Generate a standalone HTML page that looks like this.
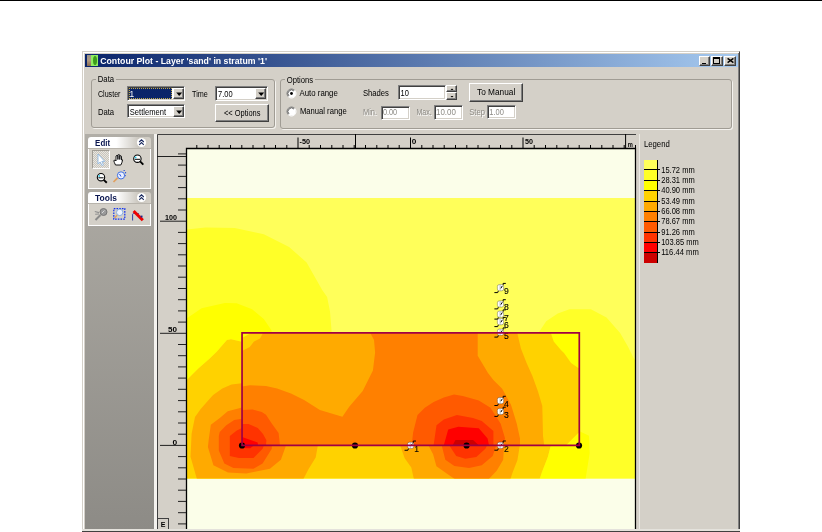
<!DOCTYPE html>
<html><head><meta charset="utf-8">
<style>
html,body{margin:0;padding:0;width:822px;height:532px;overflow:hidden;background:#fff;font-family:"Liberation Sans",sans-serif;}
.a{position:absolute;}
.sunk{position:absolute;background:#fff;box-sizing:border-box;border-top:1px solid #808080;border-left:1px solid #808080;border-bottom:1px solid #fff;border-right:1px solid #fff;box-shadow:inset 1px 1px 0 #404040, inset -1px -1px 0 #d4d0c8;}
.btn{position:absolute;background:#d4d0c8;box-sizing:border-box;border-top:1px solid #fff;border-left:1px solid #fff;border-bottom:1px solid #404040;border-right:1px solid #404040;box-shadow:inset -1px -1px 0 #808080;}
.gb{position:absolute;box-sizing:border-box;border:1px solid #a09c94;border-radius:3px;box-shadow:1px 1px 0 #f4f2ee;}
svg text{font-family:"Liberation Sans",sans-serif;}
</style></head><body>
<div class="a" style="left:0;top:0;width:822px;height:1px;background:#000"></div>

<div class="a" style="left:82px;top:51px;width:658px;height:481px;background:#d4d0c8;box-sizing:border-box;border-left:1px solid #d4d0c8;border-top:1px solid #d4d0c8;border-right:1px solid #404040;box-shadow:inset 1px 1px 0 #fff, inset -1px 0 0 #808080;"></div>
<div class="a" style="left:85px;top:54px;width:653px;height:13px;background:linear-gradient(to right,#0a246a,#a6caf0);"></div>
<div class="a" style="left:87px;top:55px;width:4px;height:11px;background:linear-gradient(to bottom,#9a9488,#b09a80 50%,#8a6a50);"></div>
<div class="a" style="left:91px;top:55px;width:7px;height:11px;background:#90ee60;"></div>
<div class="a" style="left:92.5px;top:56px;width:4px;height:9px;border-radius:50%;background:#3c9c1c;"></div>
<div class="btn" style="left:699.2px;top:56px;width:11.1px;height:9.5px;"><div class="a" style="left:2px;top:5.7px;width:4.2px;height:1.4px;background:#000"></div></div>
<div class="btn" style="left:710.9px;top:56px;width:11.7px;height:9.5px;"><div class="a" style="left:1.3px;top:0.3px;width:6.8px;height:6.5px;box-sizing:border-box;border:1.1px solid #000;border-top-width:2px;"></div></div>
<div class="btn" style="left:724.2px;top:56px;width:11.4px;height:9.5px;"><svg class="a" style="left:1.8px;top:1.2px" width="8" height="6"><path d="M0.6,0.4 L6.4,4.6 M6.4,0.4 L0.6,4.6" stroke="#000" stroke-width="1.5"/></svg></div>
<div class="gb" style="left:91px;top:78.5px;width:183.5px;height:49.5px;"></div>
<div class="a" style="left:96px;top:74px;width:20px;height:8px;background:#d4d0c8;"></div>
<div class="sunk" style="left:127px;top:86.4px;width:58.30000000000001px;height:14.399999999999991px;"></div><div class="btn" style="left:173.0px;top:88.0px;width:11.2px;height:11.199999999999992px;border-right-color:#404040;"><svg class="a" style="left:2px;top:2.999999999999996px" width="7" height="5"><path d="M0.2,0.6 H6.2 L3.2,4 Z" fill="#000"/></svg></div>
<div class="a" style="left:129px;top:88px;width:43px;height:11px;background:#0a246a;box-sizing:border-box;border:1px dotted #c0a848;"></div>
<div class="sunk" style="left:127px;top:104px;width:58.30000000000001px;height:14.400000000000006px;"></div><div class="btn" style="left:173.0px;top:105.6px;width:11.2px;height:11.200000000000006px;border-right-color:#404040;"><svg class="a" style="left:2px;top:3.000000000000003px" width="7" height="5"><path d="M0.2,0.6 H6.2 L3.2,4 Z" fill="#000"/></svg></div>
<div class="sunk" style="left:215px;top:86.4px;width:52.5px;height:14.399999999999991px;"></div><div class="btn" style="left:255.2px;top:88.0px;width:11.2px;height:11.199999999999992px;border-right-color:#404040;"><svg class="a" style="left:2px;top:2.999999999999996px" width="7" height="5"><path d="M0.2,0.6 H6.2 L3.2,4 Z" fill="#000"/></svg></div>
<div class="btn" style="left:215px;top:104px;width:53.5px;height:17.799999999999997px;"></div>
<div class="gb" style="left:280px;top:79px;width:452px;height:50px;"></div>
<div class="a" style="left:285px;top:75px;width:30px;height:8px;background:#d4d0c8;"></div>
<svg class="a" style="left:286px;top:87.8px" width="11" height="11"><circle cx="5.5" cy="5.5" r="4" fill="#fff"/><path d="M2.3,8.7 A4.5,4.5 0 0 1 8.7,2.3" stroke="#808080" stroke-width="1" fill="none"/><path d="M8.7,2.3 A4.5,4.5 0 0 1 2.3,8.7" stroke="#fff" stroke-width="1" fill="none"/><path d="M3,8 A3.5,3.5 0 0 1 8,3" stroke="#404040" stroke-width="0.8" fill="none"/></svg>
<svg class="a" style="left:286px;top:105.6px" width="11" height="11"><circle cx="5.5" cy="5.5" r="4" fill="#fff"/><path d="M2.3,8.7 A4.5,4.5 0 0 1 8.7,2.3" stroke="#808080" stroke-width="1" fill="none"/><path d="M8.7,2.3 A4.5,4.5 0 0 1 2.3,8.7" stroke="#fff" stroke-width="1" fill="none"/><path d="M3,8 A3.5,3.5 0 0 1 8,3" stroke="#404040" stroke-width="0.8" fill="none"/></svg>
<svg class="a" style="left:286px;top:87.8px" width="11" height="11"><circle cx="5.5" cy="5.5" r="1.4" fill="#000"/></svg>
<div class="sunk" style="left:398px;top:85px;width:48px;height:14.799999999999997px;"></div>
<div class="btn" style="left:446px;top:84.6px;width:11px;height:7.400000000000006px;"></div>
<div class="btn" style="left:446px;top:92.3px;width:11px;height:7.5px;"></div>
<svg class="a" style="left:449px;top:86.5px" width="6" height="12"><path d="M1.5,3 H4.5 L3,1.5Z M1.5,9 H4.5 L3,10.5Z" fill="#000"/></svg>
<div class="sunk" style="left:381px;top:105.5px;width:29.30000000000001px;height:14.0px;"></div>
<div class="sunk" style="left:434px;top:105.3px;width:29px;height:14.299999999999997px;"></div>
<div class="btn" style="left:469px;top:83px;width:53.5px;height:18.5px;"></div>
<div class="sunk" style="left:487px;top:105.3px;width:29px;height:14.200000000000003px;"></div>
<div class="a" style="left:85px;top:134px;width:69px;height:395px;background:linear-gradient(to bottom,rgb(177,174,167),rgb(141,139,134));"></div>
<div class="a" style="left:154px;top:134px;width:3px;height:395px;background:#f4f2ee;"></div>
<div class="a" style="left:88px;top:137px;width:63px;height:11px;border-radius:3px 3px 0 0;background:linear-gradient(to right,#fff 0%,#fff 45%,#cbc7bf 80%,#d4d0c8 100%);"></div><svg class="a" style="left:136px;top:137px" width="11" height="11"><circle cx="5.5" cy="5.5" r="4.6" fill="#fff"/><path d="M3.2,5 L5.5,2.8 L7.8,5 M3.2,7.8 L5.5,5.6 L7.8,7.8" stroke="#1a2a60" stroke-width="1.1" fill="none"/></svg>
<div class="a" style="left:88px;top:148px;width:63px;height:41px;box-sizing:border-box;background:#d4d0c8;border:1px solid #fff;border-top:none;"></div>
<div class="a" style="left:88px;top:148px;width:63px;height:1px;background:#b8b4ac;"></div>
<div class="a" style="left:92px;top:150px;width:18px;height:19px;box-sizing:border-box;border:1px solid #a09c94;border-right-color:#fff;border-bottom-color:#fff;background-color:#e8e6e0;background-image:linear-gradient(45deg,#c8c4bc 25%,transparent 25%,transparent 75%,#c8c4bc 75%),linear-gradient(45deg,#c8c4bc 25%,transparent 25%,transparent 75%,#c8c4bc 75%);background-size:2px 2px;background-position:0 0,1px 1px;"></div>
<svg class="a" style="left:85px;top:148px" width="70" height="80">
 <path d="M13,6 V16 L15.2,14 L17,17.5 L18.5,16.8 L16.8,13.4 L19.8,13.4 Z" fill="#fff" stroke="#90b8e0" stroke-width="0.9"/>
 <path d="M30.5,17 Q29,14 28.8,12.6 L30.2,12 L31,13 V8 L32,7.3 L32.9,7.8 V11.5 V6.9 L33.9,6.6 L34.8,7 V11.5 V7.8 L35.8,7.8 L36.5,8.3 V12 Q37.5,11 37.6,12 Q37,15 35.8,17 Z" fill="#fff" stroke="#000" stroke-width="0.9"/>
 <circle cx="52.4" cy="10.7" r="3.7" fill="#fff" stroke="#000" stroke-width="1.1"/><path d="M49.8,11.3 H55" stroke="#000" stroke-width="1"/><circle cx="50.6" cy="9.4" r="0.9" fill="#20c8e8"/><path d="M55.1,13.4 L58.3,16.6" stroke="#000" stroke-width="1.9"/>
 <circle cx="16" cy="29.2" r="3.7" fill="#fff" stroke="#000" stroke-width="1.1"/><path d="M13.4,29.8 H18.6" stroke="#000" stroke-width="1"/><circle cx="14.2" cy="27.9" r="0.9" fill="#20c8e8"/><path d="M18.7,31.9 L21.8,34.8" stroke="#000" stroke-width="1.9"/>
 <path d="M28.5,34 L32.6,29.8" stroke="#e0a060" stroke-width="1.7"/><circle cx="36" cy="27.4" r="3.6" fill="#e8eeff" stroke="#4070e0" stroke-width="1"/><path d="M34.5,26 L36,28.5" stroke="#1040e0" stroke-width="0.9"/><path d="M38.6,22.5 h1.2 M40.6,24 v1.4 M40.2,27 v1.2" stroke="#1040e0" stroke-width="0.9"/>
</svg>
<div class="a" style="left:88px;top:192px;width:63px;height:11px;border-radius:3px 3px 0 0;background:linear-gradient(to right,#fff 0%,#fff 45%,#cbc7bf 80%,#d4d0c8 100%);"></div><svg class="a" style="left:136px;top:192px" width="11" height="11"><circle cx="5.5" cy="5.5" r="4.6" fill="#fff"/><path d="M3.2,5 L5.5,2.8 L7.8,5 M3.2,7.8 L5.5,5.6 L7.8,7.8" stroke="#1a2a60" stroke-width="1.1" fill="none"/></svg>
<div class="a" style="left:88px;top:203px;width:63px;height:23px;box-sizing:border-box;background:#d4d0c8;border:1px solid #fff;border-top:none;"></div>
<div class="a" style="left:88px;top:203px;width:63px;height:1px;background:#b8b4ac;"></div>
<svg class="a" style="left:85px;top:203px" width="70" height="22">
 <path d="M10.5,17 L15.5,12" stroke="#8a8a8a" stroke-width="1.9"/><circle cx="18.5" cy="9" r="3.5" fill="#9a9a9a" stroke="#707070" stroke-width="0.9"/><path d="M17,10 L19.5,7.5" stroke="#e0e0e0" stroke-width="0.9"/><path d="M9.8,8.5 L14,9.6 M10.2,11.3 L14,11" stroke="#909090" stroke-width="1.1"/>
 <rect x="28.8" y="5.6" width="11" height="10.6" fill="none" stroke="#1030f0" stroke-width="1.2" stroke-dasharray="1.6,1.1"/><circle cx="34.7" cy="9.4" r="3.2" fill="#eef4ff" stroke="#80a8e0" stroke-width="0.9"/><path d="M29.6,15 L32.2,12" stroke="#e0a060" stroke-width="1.4"/>
 <path d="M47.6,17.5 V11.3 Q48,10 50,10.3 L54,10.8" stroke="#2030a0" stroke-width="0.9" fill="none"/><path d="M48.6,8 L57.8,17.2" stroke="#ee0000" stroke-width="3"/><rect x="55.6" y="12.6" width="1.9" height="1.9" fill="#1a2a90"/>
</svg>
<svg class="a" style="left:0;top:0;will-change:transform" width="822" height="532">
<defs><clipPath id="cO"><rect x="187" y="198" width="448" height="280.5"/></clipPath><clipPath id="cI"><rect x="242" y="333" width="337" height="112.3"/></clipPath></defs>
<rect x="157" y="134" width="479" height="395" fill="#d4d0c8"/>
<path d="M157.5,529 V134.5 H636" stroke="#404040" stroke-width="1" fill="none"/>
<rect x="186" y="148" width="450" height="381" fill="#fbfee9"/>
<g clip-path="url(#cO)">
<path d="M187,198 L635,198 L635,480 L187,480 Z" fill="#ffff5a"/>
<path d="M186,229.5 L205.5,227.5 L234.7,227.9 L263.8,234.3 L289.1,247 L306.6,262.5 L322.2,290 L327.1,297 L330,311.4 L331.5,330 L332,340 L538.4,340 L538.4,333 L546.2,321.3 L557.8,313.5 L569.5,309.2 L590.9,309.2 L606.5,317.4 L620.1,333 L627.9,346.6 L633.7,358.3 L636,361 L636,480 L186,480 Z" fill="#ffff28"/>
<path d="M186,318.9 L201.6,308.2 L224.9,303 L236.6,303.3 L252.1,309.2 L263.8,318.9 L271.6,330.6 L273,345 L242,345 L241,341.4 L231,339.3 L226.9,340 L216.9,351.4 L209.7,358.6 L198.3,368.6 L186,380.7 Z M550,440 L579,431 L589,435.7 L589.7,452.9 L585.4,480 L539.3,480 L541.8,472.5 L547.9,456.7 L550.9,445 Z" fill="#ffff00"/>
<path d="M186,380.7 L198.3,368.6 L209.7,358.6 L216.9,351.4 L226.9,340 L231,339.3 L241,341.4 L300,345 L550.9,440 L550.9,445 L547.9,456.7 L541.8,472.5 L539.3,480 L186,480 Z" fill="#ffd200"/>
<path d="M242,383.2 L231.5,384.5 L222.3,388.4 L213.1,395 L208.6,400 L200.7,409 L195,416.9 L191.6,433.8 L190.5,456.8 L197.2,480 L302.9,480 L308.6,468.9 L315.7,457.4 L317.9,445 L317.9,400 Z M400,445 L404.7,458.2 L411.3,467.6 L414.1,480 L510.1,480 L512.6,472.5 L517.4,460.3 L519.9,445 L519.9,440 L400,440 Z" fill="#ffaa00"/>
<path d="M242,407.5 L227.7,411.3 L219.8,418 L210.8,424.8 L208.6,440.6 L207.9,447 L213.4,465.2 L228,472.5 L246.2,473.4 L269.9,468.8 L280.9,459.7 L285.5,447 L286.4,436 L287,420 Z M428.2,445 L433.1,454.2 L436.4,466.3 L447.4,474 L456.1,480 L487.9,480 L496.7,470.7 L503.2,459.7 L504.1,445 L504,440 L428,440 Z" fill="#ff8000"/>
<path d="M242,418.7 L234.2,420 L226.3,425.3 L219.7,432 L218.8,436 L218.8,450.6 L224.3,463.4 L233.4,468 L253.5,468.8 L262.6,463.4 L271.8,448.8 L271.8,436 L271,430 Z M441.6,445 L445.3,459.7 L454.4,466.1 L469,468 L481.8,465.2 L492.7,456.1 L496.4,445 L496,440 L441,440 Z" fill="#ff5a00"/>
<path d="M242,428 L236.8,430.5 L229.8,436 L229.8,456.1 L238.9,457.9 L253.5,457.9 L262.6,448.8 L266.3,439.6 L266.3,436 L262,432 Z M449,445 L456.2,456.1 L465.3,458.8 L476.3,457 L485.4,448.8 L487.2,445 L487,440 L449,440 Z" fill="#ff3300"/>
<path d="M242,437 L257.7,442.6 L250.2,448.2 L242,448 Z" fill="#ff0000"/>
</g><g clip-path="url(#cI)">
<path d="M242,333 L579,333 L579,445.3 L242,445.3 Z" fill="#ffaa00"/>
<path d="M242,333 L242,351 L249.7,347 L254,341.4 L260,338.6 L263,333 Z M517.3,333 L520.9,348.6 L526.6,362.9 L532.3,375.7 L538,391.4 L542.3,406 L543,436 L544.2,445.3 L579,445.3 L579,333 Z" fill="#ffd200"/>
<path d="M242,333 L242,338 L251,333 Z M550.9,333 L553.7,341.4 L560.9,350 L564,352.9 L571.1,362.9 L578.3,367.9 L579,368 L579,333 Z M566,445.3 L578.3,433 L579,433 L579,445.3 Z" fill="#ffff00"/>
<path d="M242,386.4 L250,385.2 L266,386 L277.1,388.6 L291,393.5 L304.1,399.9 L319.9,410 L342.4,416.8 L349.2,406.7 L362.7,390.9 L372.9,370.6 L375.1,352.5 L374,340 L370.3,333 L477.7,333 L477.7,355.7 L488,373 L493.4,380 L502.2,388.8 L511,404.8 L516.8,423.8 L520,438.4 L520,445.3 L242,445.3 Z" fill="#ff8000"/>
<path d="M242,410.1 L252.6,409.5 L261.8,412.1 L266,414.7 L271.4,423.1 L278.6,433.1 L280,445.3 L242,445.3 Z M411.7,445.3 L413.1,432.6 L417.5,415 L424.8,407.7 L433.6,401.9 L443.8,397.5 L454,394.6 L462.8,396.1 L478.8,400.4 L490.5,407.7 L500.7,423.8 L505.1,438.4 L502.2,445.3 Z" fill="#ff5a00"/>
<path d="M242,424 L248.6,424 L257.8,427.9 L263,434 L266.4,440.3 L266,445.3 L242,445.3 Z M433.6,445.3 L436.5,425.3 L443.8,419.4 L456.9,415 L473,418 L481.8,420.9 L493.4,431.1 L493.4,445.3 Z" fill="#ff3300"/>
<path d="M242,437 L257.7,442.6 L258,445.3 L242,445.3 Z M443.8,445.3 L448.2,429.6 L458.4,426.7 L478.8,428.2 L487.6,438.4 L489,445.3 Z" fill="#ff0000"/>
<path d="M452.6,445.3 L455.5,439.9 L473,439.9 L478.8,445.3 Z" fill="#cc0000"/>
</g>
<g transform="translate(410.65,445.35)"><path d="M-6.1,4.9 H-2.8 L-2.2,3.2 M2.6,-2.4 V-4.3 H5.3" stroke="#000" stroke-width="1" fill="none"/><rect x="-3.1" y="-3.1" width="6.2" height="6.2" rx="1.8" fill="#fff" stroke="rgba(0,0,0,0.4)" stroke-width="0.7"/><path d="M-0.4,-3 V3" stroke="#90a0b0" stroke-width="0.7"/><path d="M1.8,-1.8 L0.4,0.6" stroke="#000" stroke-width="1"/><text x="3.6" y="6.3" font-size="8.4" textLength="4.8" lengthAdjust="spacingAndGlyphs" fill="#000" stroke="#000" stroke-width="0.1">1</text></g>
<g transform="translate(500.5,445.3)"><path d="M-6.1,4.9 H-2.8 L-2.2,3.2 M2.6,-2.4 V-4.3 H5.3" stroke="#000" stroke-width="1" fill="none"/><rect x="-3.1" y="-3.1" width="6.2" height="6.2" rx="1.8" fill="#fff" stroke="rgba(0,0,0,0.4)" stroke-width="0.7"/><path d="M-0.4,-3 V3" stroke="#90a0b0" stroke-width="0.7"/><path d="M1.8,-1.8 L0.4,0.6" stroke="#000" stroke-width="1"/><text x="3.6" y="6.3" font-size="8.4" textLength="4.8" lengthAdjust="spacingAndGlyphs" fill="#000" stroke="#000" stroke-width="0.1">2</text></g>
<g transform="translate(500.5,411.5)"><path d="M-6.1,4.9 H-2.8 L-2.2,3.2 M2.6,-2.4 V-4.3 H5.3" stroke="#000" stroke-width="1" fill="none"/><rect x="-3.1" y="-3.1" width="6.2" height="6.2" rx="1.8" fill="#fff" stroke="rgba(0,0,0,0.4)" stroke-width="0.7"/><path d="M-0.4,-3 V3" stroke="#90a0b0" stroke-width="0.7"/><path d="M1.8,-1.8 L0.4,0.6" stroke="#000" stroke-width="1"/><text x="3.6" y="6.3" font-size="8.4" textLength="4.8" lengthAdjust="spacingAndGlyphs" fill="#000" stroke="#000" stroke-width="0.1">3</text></g>
<g transform="translate(500.5,400.6)"><path d="M-6.1,4.9 H-2.8 L-2.2,3.2 M2.6,-2.4 V-4.3 H5.3" stroke="#000" stroke-width="1" fill="none"/><rect x="-3.1" y="-3.1" width="6.2" height="6.2" rx="1.8" fill="#fff" stroke="rgba(0,0,0,0.4)" stroke-width="0.7"/><path d="M-0.4,-3 V3" stroke="#90a0b0" stroke-width="0.7"/><path d="M1.8,-1.8 L0.4,0.6" stroke="#000" stroke-width="1"/><text x="3.6" y="6.3" font-size="8.4" textLength="4.8" lengthAdjust="spacingAndGlyphs" fill="#000" stroke="#000" stroke-width="0.1">4</text></g>
<g transform="translate(500.5,332.2)"><path d="M-6.1,4.9 H-2.8 L-2.2,3.2 M2.6,-2.4 V-4.3 H5.3" stroke="#000" stroke-width="1" fill="none"/><rect x="-3.1" y="-3.1" width="6.2" height="6.2" rx="1.8" fill="#fff" stroke="rgba(0,0,0,0.4)" stroke-width="0.7"/><path d="M-0.4,-3 V3" stroke="#90a0b0" stroke-width="0.7"/><path d="M1.8,-1.8 L0.4,0.6" stroke="#000" stroke-width="1"/><text x="3.6" y="6.3" font-size="8.4" textLength="4.8" lengthAdjust="spacingAndGlyphs" fill="#000" stroke="#000" stroke-width="0.1">5</text></g>
<g transform="translate(500.5,321.7)"><path d="M-6.1,4.9 H-2.8 L-2.2,3.2 M2.6,-2.4 V-4.3 H5.3" stroke="#000" stroke-width="1" fill="none"/><rect x="-3.1" y="-3.1" width="6.2" height="6.2" rx="1.8" fill="#fff" stroke="rgba(0,0,0,0.4)" stroke-width="0.7"/><path d="M-0.4,-3 V3" stroke="#90a0b0" stroke-width="0.7"/><path d="M1.8,-1.8 L0.4,0.6" stroke="#000" stroke-width="1"/><text x="3.6" y="6.3" font-size="8.4" textLength="4.8" lengthAdjust="spacingAndGlyphs" fill="#000" stroke="#000" stroke-width="0.1">6</text></g>
<g transform="translate(500.5,314.2)"><path d="M-6.1,4.9 H-2.8 L-2.2,3.2 M2.6,-2.4 V-4.3 H5.3" stroke="#000" stroke-width="1" fill="none"/><rect x="-3.1" y="-3.1" width="6.2" height="6.2" rx="1.8" fill="#fff" stroke="rgba(0,0,0,0.4)" stroke-width="0.7"/><path d="M-0.4,-3 V3" stroke="#90a0b0" stroke-width="0.7"/><path d="M1.8,-1.8 L0.4,0.6" stroke="#000" stroke-width="1"/><text x="3.6" y="6.3" font-size="8.4" textLength="4.8" lengthAdjust="spacingAndGlyphs" fill="#000" stroke="#000" stroke-width="0.1">7</text></g>
<g transform="translate(500.5,304)"><path d="M-6.1,4.9 H-2.8 L-2.2,3.2 M2.6,-2.4 V-4.3 H5.3" stroke="#000" stroke-width="1" fill="none"/><rect x="-3.1" y="-3.1" width="6.2" height="6.2" rx="1.8" fill="#fff" stroke="rgba(0,0,0,0.4)" stroke-width="0.7"/><path d="M-0.4,-3 V3" stroke="#90a0b0" stroke-width="0.7"/><path d="M1.8,-1.8 L0.4,0.6" stroke="#000" stroke-width="1"/><text x="3.6" y="6.3" font-size="8.4" textLength="4.8" lengthAdjust="spacingAndGlyphs" fill="#000" stroke="#000" stroke-width="0.1">8</text></g>
<g transform="translate(500.5,287.7)"><path d="M-6.1,4.9 H-2.8 L-2.2,3.2 M2.6,-2.4 V-4.3 H5.3" stroke="#000" stroke-width="1" fill="none"/><rect x="-3.1" y="-3.1" width="6.2" height="6.2" rx="1.8" fill="#fff" stroke="rgba(0,0,0,0.4)" stroke-width="0.7"/><path d="M-0.4,-3 V3" stroke="#90a0b0" stroke-width="0.7"/><path d="M1.8,-1.8 L0.4,0.6" stroke="#000" stroke-width="1"/><text x="3.6" y="6.3" font-size="8.4" textLength="4.8" lengthAdjust="spacingAndGlyphs" fill="#000" stroke="#000" stroke-width="0.1">9</text></g>
<circle cx="242" cy="445.5" r="3.1" fill="#000"/>
<circle cx="355" cy="445.5" r="3.1" fill="#000"/>
<circle cx="466.6" cy="445.5" r="3.1" fill="#000"/>
<circle cx="579" cy="445.5" r="3.1" fill="#000"/>
<path d="M242.05,332.9 H579.3 V445.4 H242.05 Z" stroke="#a00044" stroke-width="1.7" fill="none"/>
<path d="M186.5,529 V148.5 H635.5 V529" stroke="#000" stroke-width="1.3" fill="none"/>
<path d="M196.8,145 V148 M208.0,145 V148 M219.2,145 V148 M230.5,145 V148 M241.8,145 V148 M253.0,145 V148 M264.2,145 V148 M275.5,145 V148 M286.8,145 V148 M298.0,137.5 V148 M309.2,145 V148 M320.5,145 V148 M331.8,145 V148 M343.0,145 V148 M354.2,145 V148 M365.5,145 V148 M376.8,145 V148 M388.0,145 V148 M399.2,145 V148 M410.5,137.5 V148 M421.8,145 V148 M433.0,145 V148 M444.2,145 V148 M455.5,145 V148 M466.8,145 V148 M478.0,145 V148 M489.2,145 V148 M500.5,145 V148 M511.8,145 V148 M523.0,137.5 V148 M534.2,145 V148 M545.5,145 V148 M556.8,145 V148 M568.0,145 V148 M579.2,145 V148 M590.5,145 V148 M601.8,145 V148 M613.0,145 V148 M624.2,145 V148 M635.5,145 V148 M355.5,134 V148 M625.6,134 V148" stroke="#000" stroke-width="1"/>
<path d="M178,523.9 H186 M178,512.7 H186 M178,501.4 H186 M178,490.2 H186 M178,479.0 H186 M178,467.8 H186 M178,456.6 H186 M160,445.4 H186 M178,434.2 H186 M178,423.0 H186 M178,411.8 H186 M178,400.6 H186 M178,389.3 H186 M178,378.1 H186 M178,366.9 H186 M178,355.7 H186 M178,344.5 H186 M160,333.3 H186 M178,322.1 H186 M178,310.9 H186 M178,299.7 H186 M178,288.5 H186 M178,277.2 H186 M178,266.0 H186 M178,254.8 H186 M178,243.6 H186 M178,232.4 H186 M160,221.2 H186 M178,210.0 H186 M178,198.8 H186 M178,187.6 H186 M178,176.4 H186 M178,165.1 H186 M178,153.9 H186 M157,156.5 H186" stroke="#202020" stroke-width="1"/>
<rect x="157.5" y="518.5" width="11" height="11" fill="#d4d0c8" stroke="#404040" stroke-width="1"/>
<path d="M639.5,134 V529" stroke="#eceae4" stroke-width="1"/><path d="M636.5,148 V529" stroke="#bcb8b0" stroke-width="1"/>
<rect x="644" y="160" width="13" height="9.5" fill="#ffff5a"/>
<rect x="644" y="169.5" width="13" height="11.0" fill="#ffff28"/>
<rect x="644" y="180.5" width="13" height="10.0" fill="#ffff00"/>
<rect x="644" y="190.5" width="13" height="11.0" fill="#ffd200"/>
<rect x="644" y="201.5" width="13" height="10.0" fill="#ffaa00"/>
<rect x="644" y="211.5" width="13" height="10.0" fill="#ff8000"/>
<rect x="644" y="221.5" width="13" height="11.0" fill="#ff5a00"/>
<rect x="644" y="232.5" width="13" height="10.0" fill="#ff3300"/>
<rect x="644" y="242.5" width="13" height="10.0" fill="#ff0000"/>
<rect x="644" y="252.5" width="13" height="10.5" fill="#cc0000"/>
<path d="M644,169.5 H660 M644,180.5 H660 M644,190.5 H660 M644,201.5 H660 M644,211.5 H660 M644,221.5 H660 M644,232.5 H660 M644,242.5 H660 M644,252.5 H660 M657.5,160 V263" stroke="#000" stroke-width="1"/>
</svg>
<div class="a" style="left:82px;top:529px;width:658px;height:1.5px;background:#e4e2dc;"></div><div class="a" style="left:82px;top:530.5px;width:658px;height:1.5px;background:#404040;"></div>
<svg class="a" style="left:0;top:0;will-change:transform" width="822" height="532">
<text x="100.2" y="64" font-size="8.6" textLength="166.8" lengthAdjust="spacingAndGlyphs" font-weight="bold" fill="#fff">Contour Plot - Layer 'sand' in stratum '1'</text>
<text x="97.8" y="81.9" font-size="8.6" textLength="16.3" lengthAdjust="spacingAndGlyphs" fill="#000" stroke="#000" stroke-width="0.0">Data</text>
<text x="97.9" y="96.9" font-size="9.2" textLength="22.6" lengthAdjust="spacingAndGlyphs" fill="#000" stroke="#000" stroke-width="0.0">Cluster</text>
<text x="129.6" y="96.6" font-size="8.8" textLength="4.6" lengthAdjust="spacingAndGlyphs" fill="#fff" stroke="#fff" stroke-width="0.0">1</text>
<text x="97.9" y="114.6" font-size="9.2" textLength="16.2" lengthAdjust="spacingAndGlyphs" fill="#000" stroke="#000" stroke-width="0.0">Data</text>
<text x="129.8" y="114.5" font-size="9.0" textLength="36.2" lengthAdjust="spacingAndGlyphs" fill="#000" stroke="#000" stroke-width="0.0">Settlement</text>
<text x="192.1" y="97.2" font-size="9.2" textLength="15.8" lengthAdjust="spacingAndGlyphs" fill="#000" stroke="#000" stroke-width="0.0">Time</text>
<text x="218.1" y="97.2" font-size="9.2" textLength="14.6" lengthAdjust="spacingAndGlyphs" fill="#000" stroke="#000" stroke-width="0.0">7.00</text>
<text x="224" y="115.7" font-size="9.0" textLength="36.5" lengthAdjust="spacingAndGlyphs" fill="#000" stroke="#000" stroke-width="0.0">&lt;&lt; Options</text>
<text x="286.7" y="83.4" font-size="9.0" textLength="26.4" lengthAdjust="spacingAndGlyphs" fill="#000" stroke="#000" stroke-width="0.0">Options</text>
<text x="299.5" y="96" font-size="9.0" textLength="38.3" lengthAdjust="spacingAndGlyphs" fill="#000" stroke="#000" stroke-width="0.0">Auto range</text>
<text x="299.9" y="113.6" font-size="9.0" textLength="46.8" lengthAdjust="spacingAndGlyphs" fill="#000" stroke="#000" stroke-width="0.0">Manual range</text>
<text x="362.9" y="95.5" font-size="9.0" textLength="26.0" lengthAdjust="spacingAndGlyphs" fill="#000" stroke="#000" stroke-width="0.0">Shades</text>
<text x="400.6" y="95.5" font-size="9.0" textLength="8.3" lengthAdjust="spacingAndGlyphs" fill="#000" stroke="#000" stroke-width="0.0">10</text>
<text x="363.8" y="115.89999999999999" font-size="9.0" textLength="14.1" lengthAdjust="spacingAndGlyphs" fill="#fff">Min.</text>
<text x="363" y="115.1" font-size="9.0" textLength="14.1" lengthAdjust="spacingAndGlyphs" fill="#8c8a84" stroke="#8c8a84" stroke-width="0.0">Min.</text>
<text x="382.9" y="115.1" font-size="9.0" textLength="14.3" lengthAdjust="spacingAndGlyphs" fill="#8c8a84" stroke="#8c8a84" stroke-width="0.0">0.00</text>
<text x="417.2" y="115.89999999999999" font-size="9.0" textLength="15.4" lengthAdjust="spacingAndGlyphs" fill="#fff">Max.</text>
<text x="416.4" y="115.1" font-size="9.0" textLength="15.4" lengthAdjust="spacingAndGlyphs" fill="#8c8a84" stroke="#8c8a84" stroke-width="0.0">Max.</text>
<text x="436" y="115.1" font-size="9.0" textLength="19.9" lengthAdjust="spacingAndGlyphs" fill="#8c8a84" stroke="#8c8a84" stroke-width="0.0">10.00</text>
<text x="477" y="95" font-size="9.0" textLength="38.3" lengthAdjust="spacingAndGlyphs" fill="#000" stroke="#000" stroke-width="0.0">To Manual</text>
<text x="470.0" y="115.5" font-size="9.0" textLength="15.7" lengthAdjust="spacingAndGlyphs" fill="#fff">Step</text>
<text x="469.2" y="114.7" font-size="9.0" textLength="15.7" lengthAdjust="spacingAndGlyphs" fill="#8c8a84" stroke="#8c8a84" stroke-width="0.0">Step</text>
<text x="489.3" y="114.7" font-size="9.0" textLength="14.6" lengthAdjust="spacingAndGlyphs" fill="#8c8a84" stroke="#8c8a84" stroke-width="0.0">1.00</text>
<text x="95.1" y="145.7" font-size="9.4" textLength="15.0" lengthAdjust="spacingAndGlyphs" font-weight="bold" fill="#0a1650">Edit</text>
<text x="95.1" y="200.7" font-size="9.4" textLength="21.9" lengthAdjust="spacingAndGlyphs" font-weight="bold" fill="#0a1650">Tools</text>
<text x="643.9" y="146.8" font-size="8.2" textLength="25.9" lengthAdjust="spacingAndGlyphs" fill="#000" stroke="#000" stroke-width="0.0">Legend</text>
<text x="299.6" y="143.5" font-size="7.6" textLength="10.5" lengthAdjust="spacingAndGlyphs" font-weight="bold" fill="#000">-50</text>
<text x="411.8" y="143.5" font-size="7.6" textLength="4.6" lengthAdjust="spacingAndGlyphs" font-weight="bold" fill="#000">0</text>
<text x="525" y="143.5" font-size="7.6" textLength="8.0" lengthAdjust="spacingAndGlyphs" font-weight="bold" fill="#000">50</text>
<text x="627.7" y="146.8" font-size="7.6" textLength="5.1" lengthAdjust="spacingAndGlyphs" font-weight="bold" fill="#000">m</text>
<text x="165.1" y="219.7" font-size="6.8" textLength="11.9" lengthAdjust="spacingAndGlyphs" font-weight="bold" fill="#000">100</text>
<text x="167.9" y="331.7" font-size="6.8" textLength="9.0" lengthAdjust="spacingAndGlyphs" font-weight="bold" fill="#000">50</text>
<text x="172.6" y="444.8" font-size="7.4" textLength="4.7" lengthAdjust="spacingAndGlyphs" font-weight="bold" fill="#000">0</text>
<text x="160.8" y="527" font-size="7.6" textLength="4.7" lengthAdjust="spacingAndGlyphs" font-weight="bold" fill="#000">E</text>
<text x="661.2" y="172.8" font-size="8.2" textLength="33.5" lengthAdjust="spacingAndGlyphs" fill="#000" stroke="#000" stroke-width="0.0">15.72 mm</text>
<text x="661.2" y="182.8" font-size="8.2" textLength="33.5" lengthAdjust="spacingAndGlyphs" fill="#000" stroke="#000" stroke-width="0.0">28.31 mm</text>
<text x="661.2" y="193.1" font-size="8.2" textLength="33.5" lengthAdjust="spacingAndGlyphs" fill="#000" stroke="#000" stroke-width="0.0">40.90 mm</text>
<text x="661.2" y="203.5" font-size="8.2" textLength="33.5" lengthAdjust="spacingAndGlyphs" fill="#000" stroke="#000" stroke-width="0.0">53.49 mm</text>
<text x="661.2" y="213.8" font-size="8.2" textLength="33.5" lengthAdjust="spacingAndGlyphs" fill="#000" stroke="#000" stroke-width="0.0">66.08 mm</text>
<text x="661.2" y="223.8" font-size="8.2" textLength="33.5" lengthAdjust="spacingAndGlyphs" fill="#000" stroke="#000" stroke-width="0.0">78.67 mm</text>
<text x="661.2" y="235.0" font-size="8.2" textLength="33.5" lengthAdjust="spacingAndGlyphs" fill="#000" stroke="#000" stroke-width="0.0">91.26 mm</text>
<text x="661.2" y="244.8" font-size="8.2" textLength="37.6" lengthAdjust="spacingAndGlyphs" fill="#000" stroke="#000" stroke-width="0.0">103.85 mm</text>
<text x="661.2" y="255.0" font-size="8.2" textLength="37.6" lengthAdjust="spacingAndGlyphs" fill="#000" stroke="#000" stroke-width="0.0">116.44 mm</text>
</svg>
</body></html>
